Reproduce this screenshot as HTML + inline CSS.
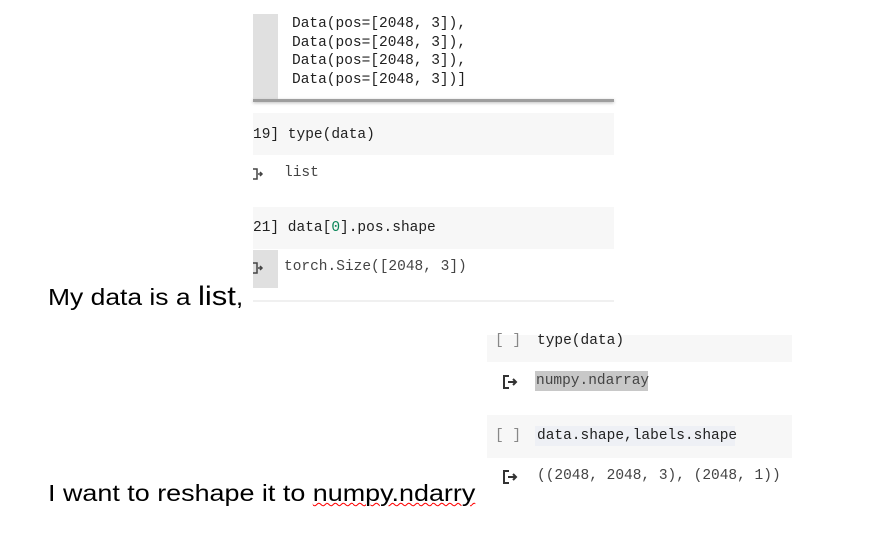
<!DOCTYPE html>
<html><head><style>
body{margin:0;width:887px;height:541px;background:#fff;position:relative;overflow:hidden;font-family:"Liberation Mono",monospace;}
.a{position:absolute}
.m{font-family:"Liberation Mono",monospace;font-size:14.5px;color:#212121;white-space:pre;line-height:18.5px}
.t{font-family:"Liberation Sans",sans-serif;color:#000;white-space:nowrap;transform-origin:0 0}
</style></head><body>
<div class="a" style="left:253px;top:14px;width:25px;height:87px;background:#e0e0e0"></div>
<div class="a m" style="left:292px;top:15px">Data(pos=[2048, 3]),
Data(pos=[2048, 3]),
Data(pos=[2048, 3]),
Data(pos=[2048, 3])]</div>
<div class="a" style="left:253px;top:99px;width:361px;height:3px;background:#9e9e9e;box-shadow:0 1px 3px #bbb"></div>

<div class="a" style="left:253px;top:113px;width:361px;height:42px;background:#f7f7f7"></div>
<div class="a m" style="left:253px;top:126px">19] type(data)</div>
<svg class="a" style="left:253px;top:167px" width="12" height="14"><path d="M0 2H4V12H0M5 7H9M7 5L9 7L7 9" stroke="#444" stroke-width="1.5" fill="none"/></svg>
<div class="a m" style="left:284px;top:164px;color:#444">list</div>

<div class="a" style="left:253px;top:207px;width:361px;height:42px;background:#f7f7f7"></div>
<div class="a m" style="left:253px;top:219px">21] data[<span style="color:#098658">0</span>].pos.shape</div>
<div class="a" style="left:253px;top:250px;width:25px;height:38px;background:#e0e0e0"></div>
<svg class="a" style="left:253px;top:261px" width="12" height="14"><path d="M0 2H4V12H0M5 7H9M7 5L9 7L7 9" stroke="#444" stroke-width="1.5" fill="none"/></svg>
<div class="a m" style="left:284px;top:258px;color:#444">torch.Size([2048, 3])</div>
<div class="a" style="left:253px;top:300px;width:361px;height:2px;background:#f0f0f0"></div>

<div class="a t" style="left:48px;top:281px;font-size:23px;transform:scaleX(1.15)">My data is a <span style="font-size:27px">list</span>,</div>

<div class="a" style="left:487px;top:335px;width:305px;height:27px;background:#f7f7f7"></div>
<div class="a m" style="left:495px;top:332px;color:#888">[ ]</div>
<div class="a m" style="left:537px;top:332px">type(data)</div>
<div class="a" style="left:535px;top:371px;width:113px;height:20px;background:#c8c8c8"></div>
<svg class="a" style="left:502px;top:374px" width="18" height="16"><path d="M7 2H2V14H7M6 8H14M11 5L14 8L11 11" stroke="#333" stroke-width="2" fill="none"/></svg>
<div class="a m" style="left:536px;top:372px;color:#444">numpy.ndarray</div>

<div class="a" style="left:487px;top:415px;width:305px;height:43px;background:#f7f7f7"></div>
<div class="a" style="left:535px;top:426px;width:200px;height:20px;background:#eef0f5"></div>
<div class="a m" style="left:495px;top:427px;color:#888">[ ]</div>
<div class="a m" style="left:537px;top:427px">data.shape,labels.shape</div>
<svg class="a" style="left:502px;top:469px" width="18" height="16"><path d="M7 2H2V14H7M6 8H14M11 5L14 8L11 11" stroke="#333" stroke-width="2" fill="none"/></svg>
<div class="a m" style="left:537px;top:467px;color:#444">((2048, 2048, 3), (2048, 1))</div>

<div class="a t" style="left:48px;top:480px;font-size:23px;transform:scaleX(1.17)">I want to reshape it to <span style="text-decoration:underline wavy red;text-decoration-thickness:1px">numpy.ndarry</span></div>
</body></html>
